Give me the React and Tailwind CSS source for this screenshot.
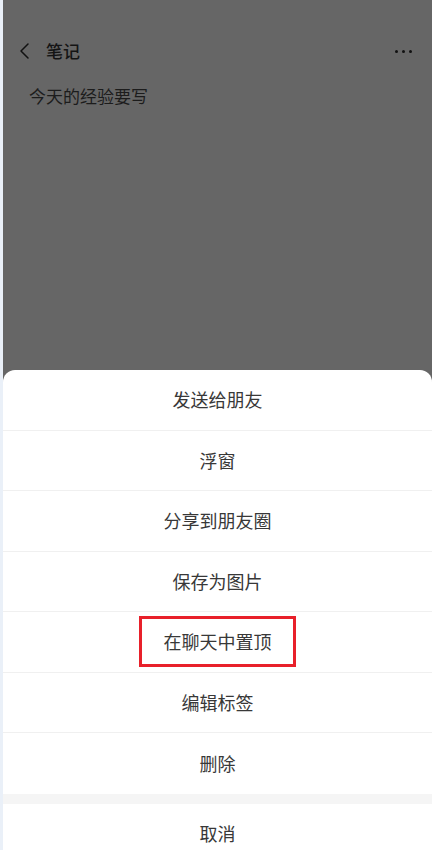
const ACTIONS = ["发送给朋友", "浮窗", "分享到朋友圈", "保存为图片", "在聊天中置顶", "编辑标签", "删除"];

const font = { fontFamily: '"Noto Sans CJK SC", "Noto Sans", sans-serif' };

export default function App() {
  return (
    <div className="h-[850px] w-[432px] overflow-hidden bg-[#eaf0f8] pl-[3px]" style={font}>
      <div className="flex h-full flex-col bg-[#666666]">
        {/* note page behind the overlay */}
        <div className="flex h-[370px] flex-col">
          <div className="mt-[34px] flex h-[34px] items-center pl-[15px] pr-[20px]">
            <svg width="14" height="20" viewBox="0 0 14 20" className="text-[#111]">
              <path d="M10 3 L3 10 L10 17" fill="none" stroke="currentColor" strokeWidth="1.5" strokeLinecap="round" strokeLinejoin="round" />
            </svg>
            <span className="ml-[14px] text-[17px] font-medium text-[#141414]">笔记</span>
            <div className="ml-auto flex gap-[4px]">
              <span className="h-[3px] w-[3px] rounded-full bg-[#111]" />
              <span className="h-[3px] w-[3px] rounded-full bg-[#111]" />
              <span className="h-[3px] w-[3px] rounded-full bg-[#111]" />
            </div>
          </div>
          <p className="mt-[15px] pl-[26px] text-[17px] text-[#1c1c1c]">今天的经验要写</p>
        </div>

        {/* action sheet */}
        <div className="flex flex-1 flex-col overflow-hidden rounded-t-[12px] bg-white">
          {ACTIONS.map((a, i) => (
            <div
              key={a}
              className={`flex h-[60.5px] shrink-0 items-center justify-center text-[18px] text-[#383838] ${i < ACTIONS.length - 1 ? "border-b border-[#f0f0f0]" : ""}`}
            >
              {a === "在聊天中置顶" ? (
                <span className="flex h-[51px] w-[157px] items-center justify-center border-[3px] border-[#e8202a]">{a}</span>
              ) : (
                a
              )}
            </div>
          ))}
          <div className="h-[10px] shrink-0 bg-[#f5f5f5]" />
          <div className="flex h-[60px] shrink-0 items-center justify-center text-[18px] text-[#383838]">取消</div>
        </div>
      </div>
    </div>
  );
}
